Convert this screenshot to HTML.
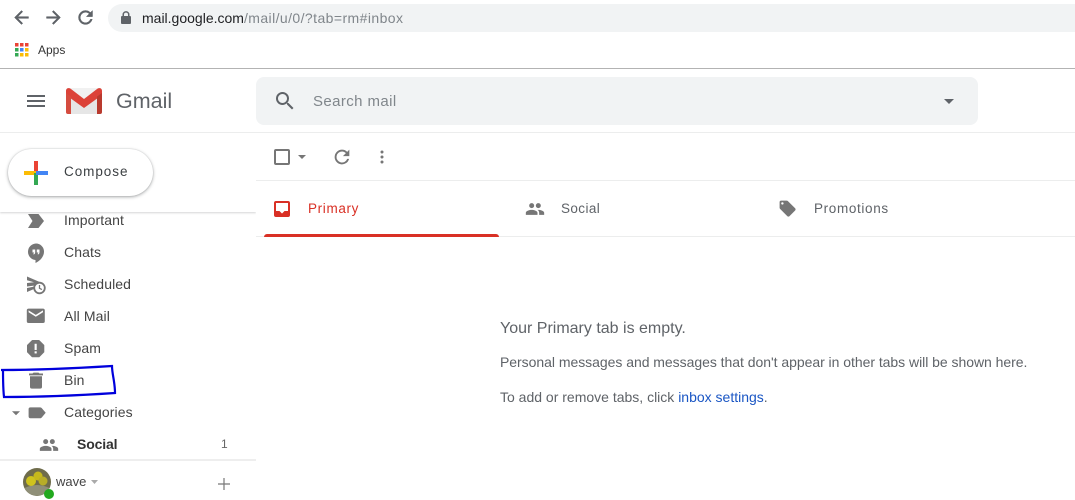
<!DOCTYPE html>
<html><head><meta charset="utf-8">
<style>
html,body{margin:0;padding:0;background:#fff}
#p{position:relative;width:1075px;height:500px;overflow:hidden;background:#fff;font-family:"Liberation Sans",sans-serif;color:#444746}
.t{position:absolute;white-space:nowrap;line-height:20px;font-size:14px;color:#5f6368}
.b{position:absolute;}
svg{position:absolute;overflow:visible}
.n{color:#444;font-size:14px;letter-spacing:.1px}
</style></head><body><div id="p">

<!-- browser chrome -->
<svg style="left:11px;top:7px" width="21" height="21" viewBox="0 0 24 24"><path d="M20 11H7.830l5.590-5.590L12 4l-8 8 8 8 1.410-1.410L7.830 13H20z" fill="#5f6368" stroke="#5f6368" stroke-width=".5"/></svg>
<svg style="left:43px;top:7px" width="21" height="21" viewBox="0 0 24 24"><path d="M12 4l-1.410 1.410L16.170 11H4v2h12.170l-5.580 5.590L12 20l8-8z" fill="#5f6368" stroke="#5f6368" stroke-width=".5"/></svg>
<svg style="left:75px;top:7px" width="21" height="21" viewBox="0 0 24 24"><path d="M17.650 6.350A7.960 7.960 0 0 0 12 4a8 8 0 1 0 7.730 10h-2.080A6 6 0 1 1 12 6c1.660 0 3.140.69 4.220 1.780L13 11h7V4z" fill="#5f6368" stroke="#5f6368" stroke-width=".5"/></svg>
<div class="b" style="left:108px;top:4px;width:967px;height:28px;background:#f1f3f4;border-radius:14px 0 0 14px"></div>
<svg style="left:120px;top:11px" width="12" height="14" viewBox="0 0 12 14"><path d="M10 5H9.500V3.600a3.500 3.500 0 0 0-7 0V5H2a1 1 0 0 0-1 1v6a1 1 0 0 0 1 1h8a1 1 0 0 0 1-1V6a1 1 0 0 0-1-1zM4 3.600a2 2 0 0 1 4 0V5H4z" fill="#5f6368"/></svg>
<div class="t" style="left:142px;top:8px;font-size:14px;color:#80868b;letter-spacing:.42px"><span style="color:#202124;letter-spacing:0">mail.google.com</span>/mail/u/0/?tab=rm#inbox</div>
<svg style="left:15px;top:43px" width="14" height="14" viewBox="0 0 14 14">
<rect x="0" y="0" width="3.500" height="3.500" fill="#ea4335"/><rect x="5" y="0" width="3.500" height="3.500" fill="#ea4335"/><rect x="10" y="0" width="3.500" height="3.500" fill="#ea4335"/>
<rect x="0" y="5" width="3.500" height="3.500" fill="#34a853"/><rect x="5" y="5" width="3.500" height="3.500" fill="#4285f4"/><rect x="10" y="5" width="3.500" height="3.500" fill="#fbbc05"/>
<rect x="0" y="10" width="3.500" height="3.500" fill="#34a853"/><rect x="5" y="10" width="3.500" height="3.500" fill="#fbbc05"/><rect x="10" y="10" width="3.500" height="3.500" fill="#fbbc05"/></svg>
<div class="t" style="left:38px;top:40px;font-size:12px;color:#333">Apps</div>
<div class="b" style="left:0;top:68px;width:1075px;height:1px;background:#b3b3b3"></div>

<!-- gmail header -->
<svg style="left:24px;top:89px" width="24" height="24" viewBox="0 0 24 24"><path d="M3 18h18v-2H3zm0-5h18v-2H3zm0-7v2h18V6z" fill="#5f6368"/></svg>
<svg style="left:66px;top:88px" width="36" height="26" viewBox="0 0 36 26">
<path d="M2 0h32a2 2 0 0 1 2 2v22a2 2 0 0 1-2 2H2a2 2 0 0 1-2-2V2a2 2 0 0 1 2-2z" fill="#f1f1f1"/>
<path d="M5 9L18 19 31 9V26H5z" fill="#e6e6e6"/>
<path d="M0 3C0 0 3-.5 5 1L18 11 31 1C33-.5 36 0 36 3V7L18 20 0 7z" fill="#dc4238"/>
<path d="M0 5L5 8.600V26H2a2 2 0 0 1-2-2z" fill="#d54c3f"/>
<path d="M36 5L31 8.600V26h3a2 2 0 0 0 2-2z" fill="#b93a2e"/>
</svg>
<div class="t" style="left:116px;top:87px;font-size:21.500px;line-height:28px;color:#5f6368">Gmail</div>
<div class="b" style="left:256px;top:77px;width:722px;height:48px;background:#f1f3f4;border-radius:8px"></div>
<svg style="left:273px;top:89px" width="24" height="24" viewBox="0 0 24 24"><path d="M15.500 14h-.79l-.28-.27A6.470 6.470 0 0 0 16 9.500 6.500 6.500 0 1 0 9.500 16c1.610 0 3.090-.59 4.230-1.570l.27.28v.79l5 4.990L20.490 19zm-6 0C7.010 14 5 11.990 5 9.500S7.010 5 9.500 5 14 7.010 14 9.500 11.990 14 9.500 14z" fill="#5f6368"/></svg>
<div class="t" style="left:313px;top:92px;font-size:15px;color:#80868b;letter-spacing:.4px">Search mail</div>
<svg style="left:944px;top:99px" width="10" height="5" viewBox="0 0 10 5"><path d="M0 0l5 5 5-5z" fill="#5f6368"/></svg>
<div class="b" style="left:0;top:132px;width:1075px;height:1px;background:#eceded"></div>

<!-- sidebar items -->
<svg style="left:28px;top:214px" width="16" height="14" viewBox="0 0 16 14"><path d="M0 0H10.500L16 7 10.500 14H0L4.500 7z" fill="#767676"/></svg>
<div class="t n" style="left:64px;top:210px">Important</div>
<svg style="left:24px;top:240px" width="24" height="24" viewBox="0 0 24 24"><path d="M12 3.500a8.300 8.300 0 0 0-8 8.300 8.200 8.200 0 0 0 7.500 8.200v3c4.500-2 8.500-6.500 8.500-11.200a8.100 8.100 0 0 0-8-8.300z" fill="#767676"/><path d="M8.500 9.500h2.700v2.800c0 1.200-.6 2-1.600 2.200l-.3-.8c.4-.2.700-.6.700-1.200H8.500zm4.300 0h2.700v2.800c0 1.200-.6 2-1.600 2.200l-.3-.8c.4-.2.700-.6.700-1.200h-1.500z" fill="#fff"/></svg>
<div class="t n" style="left:64px;top:242px">Chats</div>
<svg style="left:24px;top:272px" width="24" height="24" viewBox="0 0 24 24"><path d="M3 4.500l15 6.500-7 2.500-8 1v-3.500l7-.8-7-2z M3 16l7.500-1.500-.5 2.500-7 3z" fill="#767676"/><circle cx="15.500" cy="16" r="5.300" fill="#fff" stroke="#767676" stroke-width="1.800"/><path d="M15.500 13v3.300l2.400 1.300" fill="none" stroke="#767676" stroke-width="1.300"/></svg>
<div class="t n" style="left:64px;top:274px">Scheduled</div>
<svg style="left:25.200px;top:305.200px" width="21.600" height="21.600" viewBox="0 0 24 24"><path d="M20 4H4a2 2 0 0 0-2 2v12a2 2 0 0 0 2 2h16a2 2 0 0 0 2-2V6a2 2 0 0 0-2-2zm0 4l-8 5-8-5V6l8 5 8-5z" fill="#767676"/></svg>
<div class="t n" style="left:64px;top:306px">All Mail</div>
<svg style="left:25.300px;top:338.300px" width="21.300" height="21.300" viewBox="0 0 24 24"><path d="M15.730 3H8.270L3 8.270v7.460L8.270 21h7.460L21 15.730V8.270z" fill="#767676" stroke="#767676" stroke-width="1.500" stroke-linejoin="round"/><rect x="10.800" y="6.500" width="2.400" height="7" fill="#fff"/><rect x="10.800" y="15" width="2.400" height="2.400" fill="#fff"/></svg>
<div class="t n" style="left:64px;top:338px">Spam</div>
<svg style="left:24px;top:370.300px" width="24" height="21.300" viewBox="0 0 24 24" preserveAspectRatio="none"><path d="M6 19a2 2 0 0 0 2 2h8a2 2 0 0 0 2-2V7H6zM19 4h-3.500l-1-1h-5l-1 1H5v2h14z" fill="#767676"/></svg>
<div class="t n" style="left:64px;top:370px">Bin</div>
<svg style="left:12px;top:411px" width="8" height="4.500" viewBox="0 0 10 5"><path d="M0 0l5 5 5-5z" fill="#767676"/></svg>
<svg style="left:25.350px;top:402.200px" width="21.600" height="21.600" viewBox="0 0 24 24"><path d="M18.630 6.840A2 2 0 0 0 17 6L6 6a2 2 0 0 0-2 2v8a2 2 0 0 0 2 2h11c.67 0 1.270-.33 1.630-.84L23 12z" fill="#767676"/></svg>
<div class="t n" style="left:64px;top:402px">Categories</div>
<svg style="left:39px;top:435px" width="20" height="20" viewBox="0 0 24 24"><path d="M16 11a3 3 0 1 0 0-6 3 3 0 0 0 0 6zm-8 0a3 3 0 1 0 0-6 3 3 0 0 0 0 6zm0 2c-2.330 0-7 1.170-7 3.500V19h14v-2.500C15 14.170 10.330 13 8 13zm8 0c-.29 0-.62.020-.97.050A4.220 4.220 0 0 1 17 16.500V19h6v-2.500c0-2.330-4.670-3.500-7-3.500z" fill="#767676"/></svg>
<div class="t" style="left:77px;top:434px;font-weight:700;color:#333;letter-spacing:-.15px">Social</div>
<div class="t" style="left:221px;top:434px;font-size:12px;color:#666">1</div>

<!-- compose panel cover -->
<div class="b" style="left:0;top:133px;width:256px;height:79px;background:#fff;box-shadow:0 1px 2px rgba(60,64,67,.22);clip-path:inset(0 0 -6px 0)"></div>
<div class="b" style="left:8px;top:149px;width:145px;height:47px;border-radius:24px;background:#fff;box-shadow:0 1px 3px rgba(60,64,67,.45),0 0 1px rgba(60,64,67,.25)"></div>
<svg style="left:24px;top:161px" width="24" height="24" viewBox="0 0 24 24">
<rect x="10" y="0" width="4" height="12" fill="#ea4335"/>
<rect x="0" y="10" width="12" height="4" fill="#fbbc05"/>
<rect x="10" y="12" width="4" height="12" fill="#34a853"/>
<rect x="12" y="10" width="12" height="4" fill="#4285f4"/>
</svg>
<div class="t" style="left:64px;top:162px;font-size:13.500px;color:#3c4043;letter-spacing:.95px">Compose</div>

<!-- sidebar footer -->
<div class="b" style="left:0;top:459px;width:256px;height:41px;background:#fff;border-top:2px solid #eeeeee;box-sizing:border-box"></div>
<svg style="left:23px;top:468px" width="34" height="32" viewBox="0 0 34 32">
<circle cx="14" cy="14" r="14" fill="#6f6c4b"/>
<path d="M1.500 20Q14 14 26.500 20A14 14 0 0 1 1.500 20z" fill="#8f8f78"/>
<circle cx="8" cy="13" r="5" fill="#cfc31e"/><circle cx="15" cy="8" r="4.500" fill="#c6b91c"/><circle cx="20" cy="13" r="4.500" fill="#b8ad28"/>
<circle cx="26" cy="26" r="5" fill="#22a91f"/></svg>
<div class="t" style="left:56px;top:472px;font-size:13px;color:#444">wave</div>
<svg style="left:91px;top:480px" width="7" height="4" viewBox="0 0 7 4"><path d="M0 0l3.500 4L7 0z" fill="#aaa"/></svg>
<svg style="left:218px;top:478px" width="12" height="12" viewBox="0 0 12 12"><path d="M5.400 0h1.200v12H5.400zM0 5.400h12v1.200H0z" fill="#777"/></svg>

<!-- toolbar -->
<div class="b" style="left:274px;top:149px;width:12px;height:12px;border:2px solid #767676;border-radius:2px"></div>
<svg style="left:298px;top:155px" width="8" height="4" viewBox="0 0 8 4"><path d="M0 0l4 4 4-4z" fill="#767676"/></svg>
<svg style="left:331px;top:146px" width="22" height="22" viewBox="0 0 24 24"><path d="M17.650 6.350A7.960 7.960 0 0 0 12 4a8 8 0 1 0 7.730 10h-2.080A6 6 0 1 1 12 6c1.660 0 3.140.69 4.220 1.780L13 11h7V4z" fill="#767676"/></svg>
<svg style="left:380px;top:150px" width="4" height="14" viewBox="0 0 4 14"><circle cx="2" cy="2" r="1.500" fill="#767676"/><circle cx="2" cy="7" r="1.500" fill="#767676"/><circle cx="2" cy="12" r="1.500" fill="#767676"/></svg>
<div class="b" style="left:256px;top:180px;width:819px;height:1px;background:#eceded"></div>

<!-- tabs -->
<svg style="left:274px;top:201px" width="16" height="16" viewBox="0 0 16 16"><path d="M2 0H14a2 2 0 0 1 2 2V14a2 2 0 0 1-2 2H2a2 2 0 0 1-2-2V2a2 2 0 0 1 2-2zM2 2V10H5.500L8 12.500 10.500 10H14V2z" fill="#d93025" fill-rule="evenodd"/></svg>
<div class="t" style="left:308px;top:199px;font-size:13.500px;color:#d93025;letter-spacing:.65px">Primary</div>
<div class="b" style="left:264px;top:234px;width:235px;height:3px;background:#d93025;border-radius:3px 3px 0 0"></div>
<svg style="left:525px;top:199px" width="20" height="20" viewBox="0 0 24 24"><path d="M16 11a3 3 0 1 0 0-6 3 3 0 0 0 0 6zm-8 0a3 3 0 1 0 0-6 3 3 0 0 0 0 6zm0 2c-2.330 0-7 1.170-7 3.500V19h14v-2.500C15 14.170 10.330 13 8 13zm8 0c-.29 0-.62.020-.97.050A4.220 4.220 0 0 1 17 16.500V19h6v-2.500c0-2.330-4.670-3.500-7-3.500z" fill="#767676"/></svg>
<div class="t" style="left:561px;top:199px;font-size:13.500px;color:#5f6368;letter-spacing:.4px">Social</div>
<svg style="left:778.400px;top:199.400px" width="19.200" height="19.200" viewBox="0 0 24 24"><path d="M21.410 11.580l-9-9A2 2 0 0 0 11 2H4a2 2 0 0 0-2 2v7c0 .55.220 1.050.59 1.420l9 9A2 2 0 0 0 13 22c.55 0 1.050-.22 1.410-.59l7-7c.37-.36.59-.86.59-1.410s-.23-1.060-.59-1.420zM5.500 7A1.500 1.500 0 1 1 5.500 4a1.500 1.500 0 0 1 0 3z" fill="#767676"/></svg>
<div class="t" style="left:814px;top:199px;font-size:13.500px;color:#5f6368;letter-spacing:.65px">Promotions</div>
<div class="b" style="left:499px;top:236px;width:576px;height:1px;background:#eceded"></div>
<div class="b" style="left:256px;top:236px;width:8px;height:1px;background:#eceded"></div>

<!-- empty message -->
<div class="t" style="left:500px;top:319px;font-size:16px;color:#5f6368">Your Primary tab is empty.</div>
<div class="t" style="left:500px;top:352px;font-size:14px;color:#5f6368;letter-spacing:-.036px">Personal messages and messages that don't appear in other tabs will be shown here.</div>
<div class="t" style="left:500px;top:387px;font-size:14px;color:#5f6368">To add or remove tabs, click <span style="color:#1a56c4">inbox settings</span>.</div>

<!-- blue annotation -->
<svg style="left:0;top:360px" width="120" height="40" viewBox="0 0 120 40"><path d="M1 10C40 10 80 8 112 6C112 14 115 22 115 33C85 35 50 37 4 37C3 28 3 20 3 10" fill="none" stroke="#0000dc" stroke-width="2.200"/></svg>

</div></body></html>
